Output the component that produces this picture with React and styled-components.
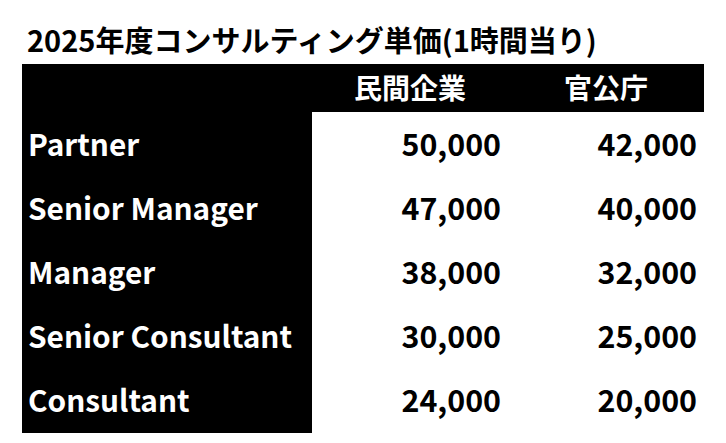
import React from 'react';
import styled, { createGlobalStyle } from 'styled-components';

const GlobalStyle = createGlobalStyle`
  html, body {
    margin: 0;
    padding: 0;
    background: #fff;
  }
  body {
    font-family: "Noto Sans CJK JP", "Noto Sans", sans-serif;
    font-weight: 700;
  }
`

const Page = styled.div`
  padding: 23px 0 0 22px;
  width: 682px;
`

const Title = styled.h1`
  margin: 0 0 9px 5px;
  font-size: 29px;
  line-height: 32px;
  font-weight: 700;
  color: #000;
  white-space: nowrap;
`

const Table = styled.div`
  display: grid;
  grid-template-columns: 290px 196px 196px;
  grid-auto-rows: 64.2px;
  grid-template-rows: 48px;
`

const HeadCell = styled.div`
  background: #000;
  color: #fff;
  font-size: 28px;
  display: flex;
  align-items: center;
  justify-content: center;
  padding-bottom: 2px;
`

const Label = styled.div`
  background: #000;
  color: #fff;
  font-size: 29.8px;
  display: flex;
  align-items: center;
  padding: 0 0 3px 6px;
  white-space: nowrap;
`

const Value = styled.div`
  background: #fff;
  color: #000;
  font-size: 30.4px;
  display: flex;
  align-items: center;
  justify-content: flex-end;
  padding: 0 7px 3px 0;
`

const rows = [
  ['Partner', '50,000', '42,000'],
  ['Senior Manager', '47,000', '40,000'],
  ['Manager', '38,000', '32,000'],
  ['Senior Consultant', '30,000', '25,000'],
  ['Consultant', '24,000', '20,000'],
];

export default function App() {
  return (
    <Page>
      <GlobalStyle />
      <Title>2025年度コンサルティング単価(1時間当り)</Title>
      <Table>
        <HeadCell />
        <HeadCell>民間企業</HeadCell>
        <HeadCell>官公庁</HeadCell>
        {rows.map(([name, priv, pub]) => (
          <React.Fragment key={name}>
            <Label>{name}</Label>
            <Value>{priv}</Value>
            <Value>{pub}</Value>
          </React.Fragment>
        ))}
      </Table>
    </Page>
  );
}
